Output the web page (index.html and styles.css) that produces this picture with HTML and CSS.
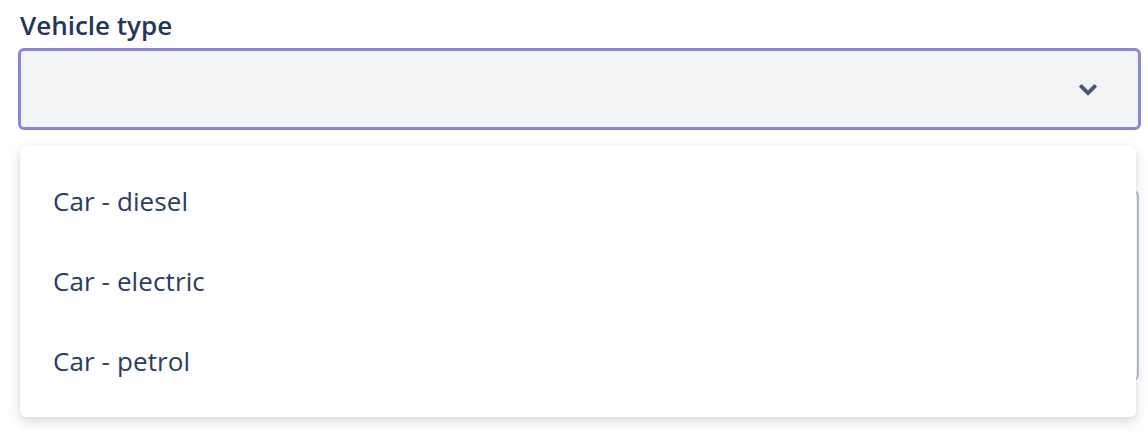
FILE: index.html
```html
<!DOCTYPE html>
<html>
<head>
<meta charset="utf-8">
<link rel="stylesheet" href="styles.css">
</head>
<body>
<div class="field">
  <label class="label">Vehicle type</label>
  <div class="select">
    <svg class="chevron" width="18" height="12" viewBox="0 0 18 12"><path d="M2.6 2.6 L9 9 L15.4 2.6" fill="none" stroke="#475a7a" stroke-width="3.8" stroke-linecap="square" stroke-linejoin="miter"/></svg>
  </div>
  <div class="next-input"></div>
  <ul class="menu">
    <li class="option">Car - diesel</li>
    <li class="option">Car - electric</li>
    <li class="option">Car - petrol</li>
  </ul>
</div>
</body>
</html>
```
FILE: styles.css
```css
html, body {
  margin: 0;
  padding: 0;
  background: #ffffff;
}
body {
  min-height: 432px;
  font-family: "Open Sans", Lato, sans-serif;
  color: #243858;
}
.field {
  position: relative;
  margin: 0 7px 0 18px;
  padding-bottom: 52px;
}
.label {
  display: block;
  height: 48px;
  padding: 10px 0 0 2px;
  box-sizing: border-box;
  font-size: 26px;
  line-height: 30px;
  font-weight: 600;
  color: #22365a;
  letter-spacing: 0;
}
.select {
  height: 82px;
  box-sizing: border-box;
  border: 3px solid #8a86d9;
  border-radius: 6px;
  background: #f3f4f6;
  display: flex;
  align-items: center;
  justify-content: flex-end;
  padding-right: 41px;
}
.chevron {
  display: block;
  margin-top: 2px;
}
.next-input {
  margin: 60px 2px 0 2px;
  height: 191px;
  box-sizing: border-box;
  border: 2px solid #b6c0ce;
  border-radius: 6px;
}
.menu {
  position: absolute;
  top: 146px;
  left: 2px;
  right: 5px;
  margin: 0;
  padding: 15px 0 16px;
  list-style: none;
  background: #ffffff;
  border-radius: 6px;
  box-shadow: 0 5px 12px rgba(40, 55, 100, 0.18), 0 0 3px rgba(40, 55, 100, 0.06);
}
.option {
  height: 80px;
  display: flex;
  align-items: center;
  padding-left: 33px;
  font-size: 26px;
  letter-spacing: 0.1px;
  color: #2a3d60;
}
```
